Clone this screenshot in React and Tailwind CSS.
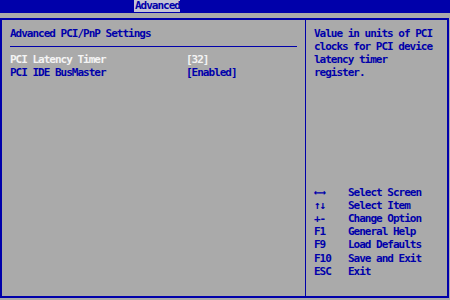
import React from 'react';

const helpKeys = [
  { key: '←→', label: 'Select Screen' },
  { key: '↑↓', label: 'Select Item' },
  { key: '+-', label: 'Change Option' },
  { key: 'F1', label: 'General Help' },
  { key: 'F9', label: 'Load Defaults' },
  { key: 'F10', label: 'Save and Exit' },
  { key: 'ESC', label: 'Exit' },
];

const BiosSetup = () => {
  return (
    <div
      className="w-[450px] h-[300px] bg-[#aaaaaa] flex flex-col overflow-hidden font-bold text-[11px] tracking-[-1px] leading-[13px] text-[#0000aa]"
      style={{ fontFamily: '"DejaVu Sans Mono", "Liberation Mono", monospace' }}
    >
      {/* top menu bar */}
      <div className="h-[13px] bg-[#0000aa] flex shrink-0">
        <div className="ml-[134px] w-[46px] h-[12px] bg-[#c4c4d4] text-[#0000aa] pl-[1px] leading-[12px]">
          Advanced
        </div>
      </div>

      <div className="mt-[5px] w-[449px] h-[280px] border-2 border-[#0000aa] flex">
        {/* settings panel */}
        <div className="w-[304px] border-r border-[#0000aa] pt-[7px] pl-[8px] pr-[8px]">
          <div>Advanced PCI/PnP Settings</div>
          <div className="mt-[6px] h-px bg-[#0000aa]" />
          <div className="mt-[6px] flex text-[#f4f4f4]">
            <span className="w-[176px]">PCI Latency Timer</span>
            <span>[32]</span>
          </div>
          <div className="flex">
            <span className="w-[176px]">PCI IDE BusMaster</span>
            <span>[Enabled]</span>
          </div>
        </div>

        {/* help panel */}
        <div className="flex-1 flex flex-col pt-[7px] pl-[8px] pb-[18px]">
          <div>Value in units of PCI</div>
          <div>clocks for PCI device</div>
          <div>latency timer</div>
          <div>register.</div>

          <div className="mt-auto leading-[13.2px]">
            {helpKeys.map((item) => (
              <div key={item.label} className="flex">
                <span className="w-[34px]">{item.key}</span>
                <span>{item.label}</span>
              </div>
            ))}
          </div>
        </div>
      </div>
    </div>
  );
};

export default function App() {
  return <BiosSetup />;
}
